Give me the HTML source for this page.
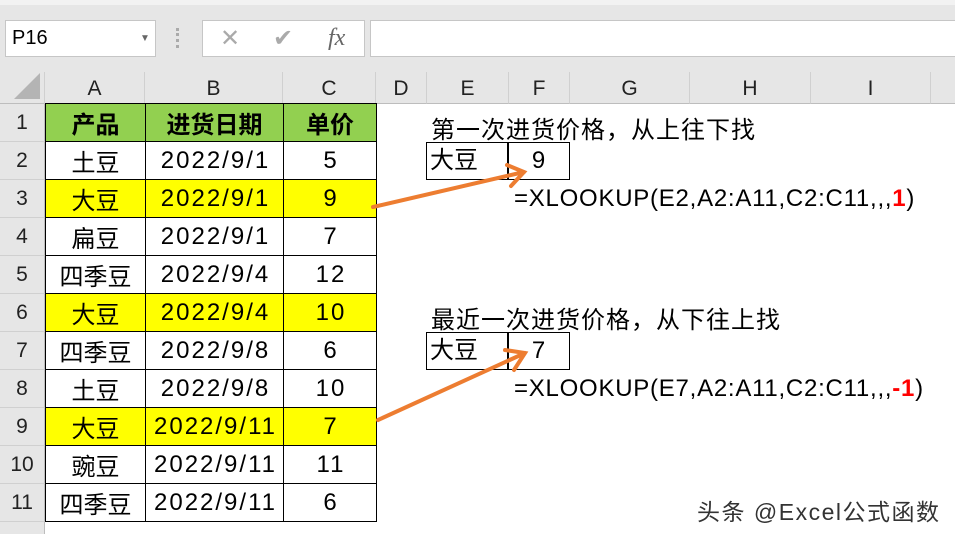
<!DOCTYPE html>
<html><head><meta charset="utf-8"><style>
*{margin:0;padding:0;box-sizing:border-box}
body{width:955px;height:534px;overflow:hidden;background:#fff;position:relative;font-family:"Liberation Sans","Noto Sans CJK SC",sans-serif}
.a{position:absolute}
.top{left:0;top:0;width:955px;height:72px;background:#e6e6e6}
.strip{left:0;top:0;width:955px;height:5px;background:#f2f2f2}
.box{background:#fff;border:1px solid #c6c6c6}
.ch{top:72px;height:32px;background:#e6e6e6;border-right:1px solid #d0d0d0;border-bottom:1px solid #bdbdbd;text-align:center;font-size:21px;line-height:34px;color:#222}
.rh{left:0;width:45px;height:38px;background:#e6e6e6;border-bottom:1px solid #d0d0d0;border-right:1px solid #bdbdbd;text-align:center;font-size:21px;line-height:38px;color:#222}
.t{font-size:24px;color:#000;white-space:nowrap}
td{border:1.5px solid #000;padding:0}
td.n{letter-spacing:2px;padding-left:2px}
.g{background:#92d050;font-weight:bold}
.y{background:#ffff00}
</style></head><body>
<div class="a top"></div><div class="a strip"></div>
<div class="a box" style="left:5px;top:20px;width:151px;height:37px;font-size:20px;line-height:35px;padding-left:6px">P16<span style="position:absolute;left:134px;top:0;font-size:10px;color:#666">▼</span></div>
<div class="a" style="left:176px;top:28px;width:3px;height:20px;border-left:3px dotted #aaa"></div>
<div class="a box" style="left:202px;top:20px;width:163px;height:37px;color:#aaa;font-size:24px;line-height:35px">
<span class="a" style="left:17px">✕</span><span class="a" style="left:70px">✔</span><span class="a" style="left:125px;font-family:'Liberation Serif',serif;font-style:italic;color:#666">fx</span></div>
<div class="a box" style="left:370px;top:20px;width:600px;height:37px"></div>
<div class="a ch" style="left:0;width:45px;background:#e6e6e6"><div style="position:absolute;right:4px;bottom:4px;width:0;height:0;border-left:26px solid transparent;border-bottom:26px solid #b4b4b4"></div></div>
<div class="a ch" style="left:45px;width:100px">A</div>
<div class="a ch" style="left:145px;width:138px">B</div>
<div class="a ch" style="left:283px;width:93px">C</div>
<div class="a ch" style="left:376px;width:51px">D</div>
<div class="a ch" style="left:427px;width:82px">E</div>
<div class="a ch" style="left:509px;width:61px">F</div>
<div class="a ch" style="left:570px;width:120px">G</div>
<div class="a ch" style="left:690px;width:121px">H</div>
<div class="a ch" style="left:811px;width:120px">I</div>
<div class="a ch" style="left:931px;width:30px"></div>
<div class="a" style="left:0;top:522px;width:45px;height:12px;background:#e6e6e6;border-right:1px solid #bdbdbd"></div>

<div class="a rh" style="top:104px">1</div><div class="a rh" style="top:142px">2</div><div class="a rh" style="top:180px">3</div><div class="a rh" style="top:218px">4</div><div class="a rh" style="top:256px">5</div><div class="a rh" style="top:294px">6</div><div class="a rh" style="top:332px">7</div><div class="a rh" style="top:370px">8</div><div class="a rh" style="top:408px">9</div><div class="a rh" style="top:446px">10</div><div class="a rh" style="top:484px">11</div>

<div class="a" style="left:45px;top:103px">
<table style="border-collapse:collapse;font-size:24px;text-align:center">
<colgroup><col style="width:100px"><col style="width:138px"><col style="width:93px"></colgroup>
<tr class="g" style="height:38px"><td>产品</td><td>进货日期</td><td>单价</td></tr>
<tr style="height:38px"><td>土豆</td><td class="n">2022/9/1</td><td class="n">5</td></tr>
<tr class="y" style="height:38px"><td>大豆</td><td class="n">2022/9/1</td><td class="n">9</td></tr>
<tr style="height:38px"><td>扁豆</td><td class="n">2022/9/1</td><td class="n">7</td></tr>
<tr style="height:38px"><td>四季豆</td><td class="n">2022/9/4</td><td class="n">12</td></tr>
<tr class="y" style="height:38px"><td>大豆</td><td class="n">2022/9/4</td><td class="n">10</td></tr>
<tr style="height:38px"><td>四季豆</td><td class="n">2022/9/8</td><td class="n">6</td></tr>
<tr style="height:38px"><td>土豆</td><td class="n">2022/9/8</td><td class="n">10</td></tr>
<tr class="y" style="height:38px"><td>大豆</td><td class="n">2022/9/11</td><td class="n">7</td></tr>
<tr style="height:38px"><td>豌豆</td><td class="n">2022/9/11</td><td class="n">11</td></tr>
<tr style="height:38px"><td>四季豆</td><td class="n">2022/9/11</td><td class="n">6</td></tr>
</table></div>

<div class="a t" style="left:431px;top:110px;letter-spacing:1px">第一次进货价格，从上往下找</div>
<div class="a" style="left:426px;top:142px;width:83px;height:38px;border:1.5px solid #000;font-size:24px;line-height:35px;padding-left:3px">大豆</div>
<div class="a" style="left:507px;top:142px;width:63px;height:38px;border:1.5px solid #000;font-size:24px;line-height:35px;text-align:center">9</div>
<div class="a t" style="left:514px;top:185px;letter-spacing:0.75px">=XLOOKUP(E2,A2:A11,C2:C11,,,<b style="color:#f00">1</b>)</div>

<div class="a t" style="left:431px;top:300px;letter-spacing:1px">最近一次进货价格，从下往上找</div>
<div class="a" style="left:426px;top:332px;width:83px;height:38px;border:1.5px solid #000;font-size:24px;line-height:35px;padding-left:3px">大豆</div>
<div class="a" style="left:507px;top:332px;width:63px;height:38px;border:1.5px solid #000;font-size:24px;line-height:35px;text-align:center">7</div>
<div class="a t" style="left:514px;top:375px;letter-spacing:0.75px">=XLOOKUP(E7,A2:A11,C2:C11,,,<b style="color:#f00">-1</b>)</div>

<svg class="a" style="left:0;top:0" width="955" height="534">
<g stroke="#ed7d31" stroke-width="4" fill="none" stroke-linecap="round">
<path d="M373 207 L524 172 M507 165 L524 172 L511 186"/>
<path d="M378 420 L525 353 M505 350 L525 353 L514 370"/>
</g></svg>
<div class="a" style="left:697px;top:493px;font-size:23px;letter-spacing:1.5px;color:#333;white-space:nowrap">头条 @Excel公式函数</div>
</body></html>
